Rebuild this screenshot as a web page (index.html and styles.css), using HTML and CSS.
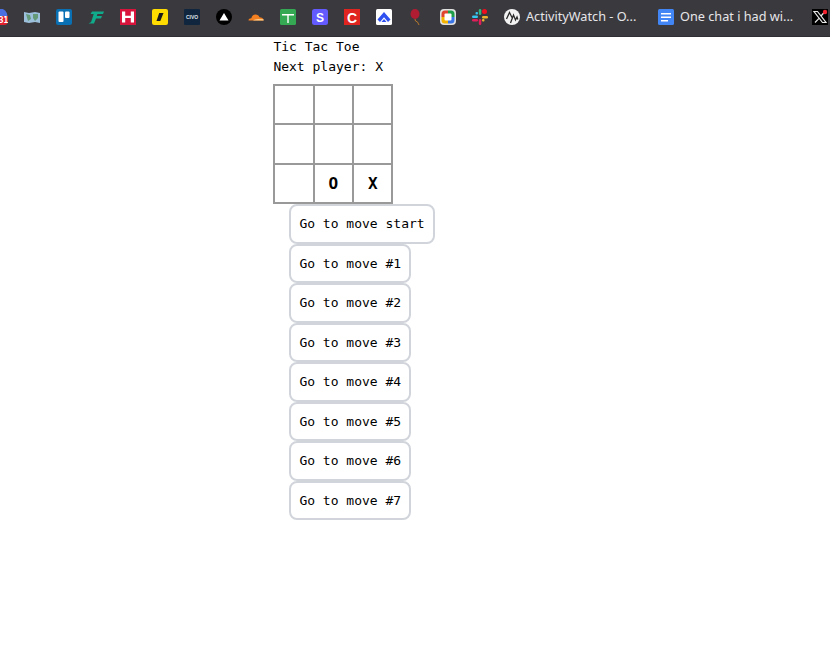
FILE: index.html
```html
<!DOCTYPE html>
<html lang="en">
<head>
<meta charset="utf-8">
<title>Tic Tac Toe</title>
<link rel="stylesheet" href="styles.css">
</head>
<body>
<header class="bar">
  <div class="icons">
    <svg class="ico" viewBox="0 0 16 16"><circle cx="8" cy="7" r="7.500" fill="#4a6fe0"/><path d="M0 7h16v5a4 4 0 0 1-4 4H4a4 4 0 0 1-4-4z" fill="#e2202c"/><text x="11.500" y="14" class="tiny">31</text></svg>
    <svg class="ico" viewBox="0 0 16 16"><path d="M0 3l5 1 6-1 5 1v10l-5-1-6 1-5-1z" fill="#9cc0dc"/><path d="M2 5l4 1 1 4-3 2zM9 5l5 0 0 4-3 3-2-3z" fill="#649a78"/></svg>
    <svg class="ico" viewBox="0 0 16 16"><rect width="16" height="16" rx="2" fill="#0a70b4"/><rect x="2.500" y="2.500" width="5" height="10.500" rx="1" fill="#fff"/><rect x="9" y="2.500" width="4.500" height="6.500" rx="1" fill="#fff"/></svg>
    <svg class="ico" viewBox="0 0 16 16"><path d="M4 2.500h12l-1 2.400H9.400L8.800 7H14l-1 2.400H8L6 14.500H0.500l2.600-1.500 2.600-8.100H2.600z" fill="#10ab8b"/></svg>
    <svg class="ico" viewBox="0 0 16 16"><rect width="16" height="16" fill="#d9143c"/><path d="M2 2.500h3.200v4.200h5.600V2.500H14v11h-3.200V9H5.200v4.500H2z" fill="#fff"/></svg>
    <svg class="ico" viewBox="0 0 16 16"><rect width="16" height="16" rx="2" fill="#ffdc00"/><path d="M7.200 4h4.300L8.300 12H4.500z" fill="#1a1a1a"/></svg>
    <svg class="ico" viewBox="0 0 16 16"><rect width="16" height="16" rx="1" fill="#10263f"/><text x="8" y="10" class="civo">CIVO</text></svg>
    <svg class="ico" viewBox="0 0 16 16"><circle cx="8" cy="8" r="8" fill="#000"/><path d="M8 4l4.500 7.500h-9z" fill="#fff"/></svg>
    <svg class="ico" viewBox="0 0 16 16"><path d="M0.500 11.500c0-1.500 1.200-2.300 2.800-2.300.6-2 2-3.700 4.200-3.700 2 0 3.300 1 4 2.800 2 0 4 1.200 4 3.200z" fill="#f38020"/><path d="M5 11.500c2-1.500 6-2 10.500-1.200l.2 1.200z" fill="#fbc98a"/></svg>
    <svg class="ico" viewBox="0 0 16 16"><rect width="16" height="16" rx="1.500" fill="#34a853"/><path d="M2 5h12v1.400H8.700V14H7.300V6.400H2z" fill="#fff"/></svg>
    <svg class="ico" viewBox="0 0 16 16"><rect width="16" height="16" rx="2.500" fill="#635bff"/><text x="8" y="12.500" class="letter">S</text></svg>
    <svg class="ico" viewBox="0 0 16 16"><rect width="16" height="16" fill="#e0241f"/><text x="8" y="13.500" class="letter big">C</text></svg>
    <svg class="ico" viewBox="0 0 16 16"><rect width="16" height="16" rx="1.500" fill="#fff"/><path d="M8 3l6.500 7.500L12 13 8 8.200 4 13l-2.500-2.500z" fill="#2e50f0"/><path d="M5.500 13L8 10l2.500 3z" fill="#2e50f0"/></svg>
    <svg class="ico" viewBox="0 0 16 16"><ellipse cx="7" cy="5" rx="4.500" ry="5" fill="#b01c32"/><path d="M7 10l.5 2 2 1 1.500 3" stroke="#b4772c" stroke-width="1" fill="none"/></svg>
    <svg class="ico" viewBox="0 0 16 16"><rect width="16" height="16" rx="4" fill="#e0e0e0"/><path d="M1.500 8V5A3.500 3.500 0 0 1 5 1.500h3V5H5v3z" fill="#e2452d"/><path d="M8 1.500h3A3.500 3.500 0 0 1 14.500 5v3H11V5H8z" fill="#1f9e4a"/><path d="M14.500 8v3a3.500 3.500 0 0 1-3.500 3.500H8V11h3V8z" fill="#3b76e8"/><path d="M8 14.500H5A3.500 3.500 0 0 1 1.500 11V8H5v3h3z" fill="#f4b400"/><rect x="4.500" y="4.500" width="7" height="7" rx="1" fill="#fff"/></svg>
    <svg class="ico" viewBox="0 0 16 16"><rect x="0" y="6.500" width="6" height="2.500" rx="1.200" fill="#36c5f0"/><rect x="3.500" y="3" width="2.500" height="2.500" rx="1" fill="#36c5f0"/><rect x="6.800" y="0" width="2.500" height="6" rx="1.200" fill="#2eb67d"/><rect x="10" y="0" width="5" height="5" rx="2.500" fill="#f20d1e"/><rect x="10" y="7" width="6" height="2.500" rx="1.200" fill="#ecb22e"/><rect x="10" y="10" width="2.500" height="2.500" rx="1" fill="#ecb22e"/><rect x="6.800" y="10" width="2.500" height="6" rx="1.200" fill="#e01e5a"/><rect x="0" y="10" width="6" height="2.500" rx="1.200" fill="#e01e5a"/></svg>
    <div class="tab">
      <svg class="ico" viewBox="0 0 16 16"><circle cx="8" cy="8" r="8" fill="#f2f2f2"/><path d="M2.500 10L5.500 3.500l2.500 5M6.500 14l3-8 2 5 1.500-3 .8 2.500" stroke="#2a2a2a" stroke-width="1.300" fill="none"/></svg>
      <span class="tab-label">ActivityWatch - O...</span>
    </div>
    <div class="tab">
      <svg class="ico" viewBox="0 0 16 16"><rect width="16" height="16" rx="1.500" fill="#4285f4"/><path d="M3 4h10v1.500H3zM3 7.500h10V9H3zM3 11h7v1.500H3z" fill="#fff"/></svg>
      <span class="tab-label">One chat i had wi...</span>
    </div>
    <svg class="ico" viewBox="0 0 16 16"><rect width="16" height="16" fill="#000"/><path d="M2 2.500h3.500l8.500 11h-3.500z" fill="none" stroke="#e8e8e8" stroke-width="1.200"/><path d="M13 2.500L9 7M7 9.300L3 13.500" stroke="#e8e8e8" stroke-width="1.200"/><circle cx="13" cy="3" r="2.200" fill="#f4212e"/></svg>
  </div>
</header>
<main class="game">
  <div>Tic Tac Toe</div>
  <div>Next player: X</div>
  <div class="board">
    <div class="square"></div><div class="square"></div><div class="square"></div>
    <div class="square"></div><div class="square"></div><div class="square"></div>
    <div class="square"></div><div class="square">O</div><div class="square">X</div>
  </div>
  <ol class="moves">
    <li><button class="move">Go to move start</button></li>
    <li><button class="move">Go to move #1</button></li>
    <li><button class="move">Go to move #2</button></li>
    <li><button class="move">Go to move #3</button></li>
    <li><button class="move">Go to move #4</button></li>
    <li><button class="move">Go to move #5</button></li>
    <li><button class="move">Go to move #6</button></li>
    <li><button class="move">Go to move #7</button></li>
  </ol>
</main>
</body>
</html>
```
FILE: styles.css
```css
* { box-sizing: border-box; }
html, body { margin: 0; padding: 0; background: #fff; }
body { width: 830px; height: 651px; overflow: hidden; font-family: "DejaVu Sans Mono", monospace; font-size: 13px; line-height: 19.5px; color: #000; }
.bar { height: 37px; background: #3a393e; border-bottom: 1px solid #2f2e32; overflow: hidden; }
.icons { display: flex; align-items: center; gap: 16px; height: 34px; margin-left: -8px; }
.ico { width: 16px; height: 16px; flex: none; display: block; }
.tab { display: flex; align-items: center; gap: 6px; flex: none; }
.tab-label { font-family: "Noto Sans", "Open Sans", sans-serif; font-size: 12.700px; color: #e6e6e8; white-space: nowrap; width: 116px; }
.tiny { font: bold 8px "DejaVu Sans Mono", monospace; fill: #fff; text-anchor: middle; }
.civo { font: bold 5px "Liberation Sans", sans-serif; fill: #dfe3e8; text-anchor: middle; }
.letter { font: bold 12px "Liberation Sans", sans-serif; fill: #fff; text-anchor: middle; }
.big { font-size: 14px; }
.game { padding-left: 273.400px; }
.board { display: grid; grid-template-columns: repeat(3, 39.330px); grid-template-rows: repeat(3, 39.330px); width: 118px; height: 120px; margin-top: 8px; }
.square { width: 41.330px; height: 41.330px; border: 2px solid #999; display: flex; align-items: center; justify-content: center; font-size: 16px; font-weight: bold; }
.moves { list-style: none; margin: 0; padding: 0 0 0 16px; }
.moves li { display: block; height: 39.500px; }
.move { display: inline-block; height: 39.500px; font: inherit; color: #000; background: #fff; border: 2px solid #d1d5db; border-radius: 8px; padding: 8px; margin: 0; }
```
